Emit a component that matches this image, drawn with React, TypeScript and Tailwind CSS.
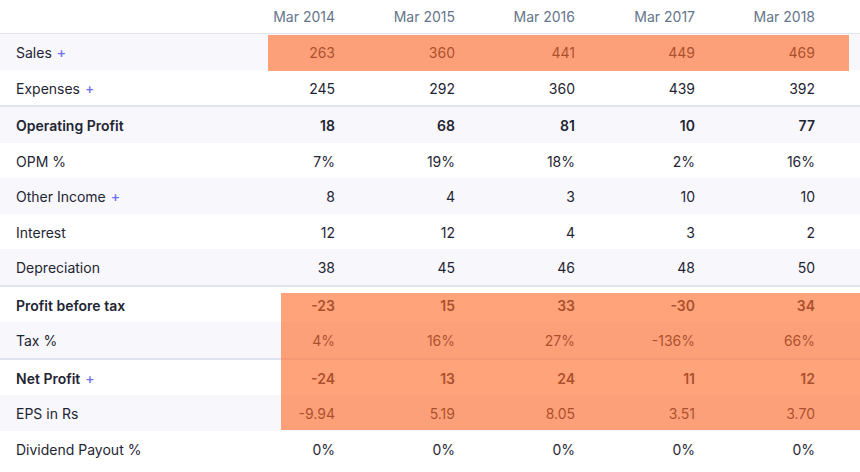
import React from 'react';

type Row = {
  label: string;
  values: string[];
  bold?: boolean;
  plus?: boolean;
  borderBelow?: boolean;
};

const years = ['Mar 2014', 'Mar 2015', 'Mar 2016', 'Mar 2017', 'Mar 2018'];

const rows: Row[] = [
  { label: 'Sales', values: ['263', '360', '441', '449', '469'], plus: true },
  { label: 'Expenses', values: ['245', '292', '360', '439', '392'], plus: true, borderBelow: true },
  { label: 'Operating Profit', values: ['18', '68', '81', '10', '77'], bold: true },
  { label: 'OPM %', values: ['7%', '19%', '18%', '2%', '16%'] },
  { label: 'Other Income', values: ['8', '4', '3', '10', '10'], plus: true },
  { label: 'Interest', values: ['12', '12', '4', '3', '2'] },
  { label: 'Depreciation', values: ['38', '45', '46', '48', '50'], borderBelow: true },
  { label: 'Profit before tax', values: ['-23', '15', '33', '-30', '34'], bold: true },
  { label: 'Tax %', values: ['4%', '16%', '27%', '-136%', '66%'], borderBelow: true },
  { label: 'Net Profit', values: ['-24', '13', '24', '11', '12'], bold: true, plus: true },
  { label: 'EPS in Rs', values: ['-9.94', '5.19', '8.05', '3.51', '3.70'] },
  { label: 'Dividend Payout %', values: ['0%', '0%', '0%', '0%', '0%'] },
];

export default function App() {
  return (
    <div className="relative w-[860px] h-[472px] bg-white overflow-hidden font-['Inter','Liberation_Sans',sans-serif] text-[14px] text-[#1f2533]">
      {/* Header */}
      <div className="flex items-center h-[34px] border-b border-[#e1e5f0] text-[#65758b]">
        <div className="w-[215px]" />
        {years.map((y) => (
          <div key={y} className="w-[120px] text-right">
            {y}
          </div>
        ))}
        <div className="flex-1" />
      </div>

      {/* Body */}
      {rows.map((row, i) => (
        <div
          key={row.label}
          className={`flex items-center pt-[2px] ${i % 2 === 0 ? 'bg-[#f7f7fc]' : 'bg-white'} ${
            row.borderBelow ? 'h-[37.5px] border-b-2 border-[#dde3ef]' : 'h-[35.5px]'
          } ${row.bold ? 'font-semibold' : ''}`}
        >
          <div className="w-[215px] pl-4 flex items-center">
            <span>{row.label}</span>
            {row.plus && <span className="ml-[5px] text-[14px] font-medium text-[#6d70f0]">+</span>}
          </div>
          {row.values.map((v, j) => (
            <div key={j} className="w-[120px] text-right">
              {v}
            </div>
          ))}
          <div className="flex-1" />
        </div>
      ))}

      {/* Highlight overlays */}
      <div className="absolute left-[268px] top-[35px] w-[581px] h-[36px] bg-[#ff6a2a]/[0.62]" />
      <div className="absolute left-[281px] top-[293px] right-0 h-[137px] bg-[#ff6a2a]/[0.62]" />
    </div>
  );
}
